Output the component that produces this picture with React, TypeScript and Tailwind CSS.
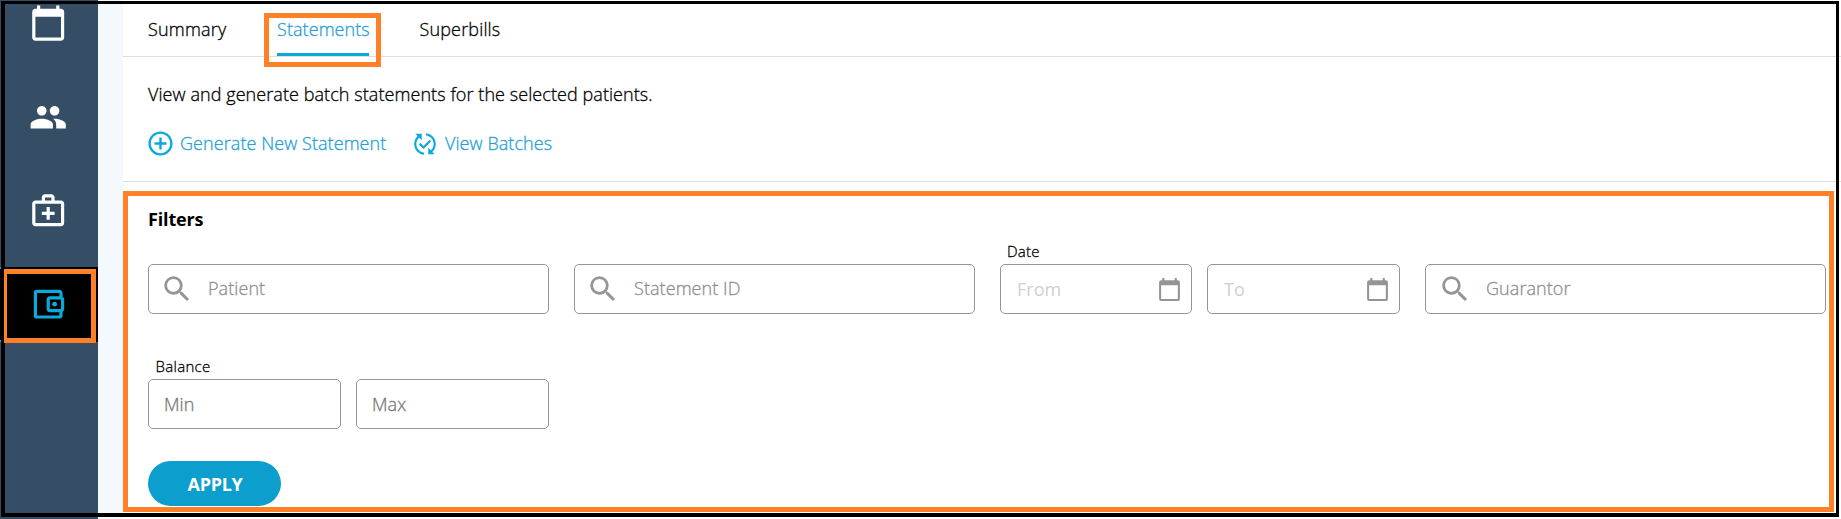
import type { ReactNode } from "react";
import {
  MdAddCircleOutline,
  MdCalendarToday,
  MdOutlineAccountBalanceWallet,
  MdOutlineMedicalServices,
  MdPeople,
  MdPublishedWithChanges,
  MdSearch,
} from "react-icons/md";

function Field({ children, className }: { children: ReactNode; className: string }) {
  return (
    <div className={`flex h-[50px] items-center rounded-[5px] border border-[#959595] ${className}`}>
      {children}
    </div>
  );
}

function SearchField({ label, inset = "pl-[11px]" }: { label: string; inset?: string }) {
  return (
    <Field className={`w-[401px] text-[#8f8f8f] ${inset}`}>
      <MdSearch className="size-[34px] shrink-0 text-[#959595]" />
      <span className="-mt-0.5 ml-[14px]">{label}</span>
    </Field>
  );
}

function DateField({ label, className }: { label: string; className: string }) {
  return (
    <Field className={`justify-between pl-4 text-[#d0d0d0] ${className}`}>
      <span className="font-normal tracking-normal [-webkit-text-stroke:0]">{label}</span>
      <MdCalendarToday className="mr-[9px] size-[25px] text-[#959595]" />
    </Field>
  );
}

function Sidebar() {
  return (
    <nav className="flex w-[98px] shrink-0 flex-col bg-[#364d66] text-white">
      <div className="flex h-[79px] justify-center pt-1 pr-0.5">
        <MdCalendarToday className="size-[38.4px]" />
      </div>
      <div className="flex h-[94px] justify-center pt-[19px] pr-0.5">
        <MdPeople className="size-[38.4px]" />
      </div>
      <div className="flex h-[94px] justify-center pt-[18px] pr-0.5">
        <MdOutlineMedicalServices className="size-[38.4px]" />
      </div>
      <div className="flex h-[75px] justify-center border-y-2 border-black bg-black pt-[16px] pr-0.5 text-[#0ca9dd]">
        <MdOutlineAccountBalanceWallet className="size-[38.4px]" />
      </div>
    </nav>
  );
}

export default function App() {
  return (
    <div className="relative flex h-[519px] w-[1841px] overflow-hidden bg-white font-['Open_Sans','Noto_Sans',sans-serif] text-[18px] leading-6 font-light tracking-[0.07px] text-black [-webkit-text-stroke:0.3px]">
      <Sidebar />
      <div className="w-[25px] shrink-0 bg-[#f4f9fd]" />
      <main className="flex flex-1 flex-col">
        <div className="flex h-[57px] border-b border-[#dedede] pt-[17px] pl-[25px]">
          <div className="w-[129px] tracking-[0.2px]">Summary</div>
          <div className="w-[142.5px] text-[#279fd5]">
            <div className="h-[39px] w-[92px] border-b-[3px] border-[#0ca9dd]">Statements</div>
          </div>
          <div className="tracking-[0.15px]">Superbills</div>
        </div>
        <section className="h-[125px] border-b border-[#dedede] pt-[25px] pl-[25px]">
          <p>View and generate batch statements for the selected patients.</p>
          <div className="mt-[23px] flex h-[29px] items-center text-[#279fd5]">
            <MdAddCircleOutline className="-ml-[2px] size-[29px] text-[#0ca9dd]" />
            <span className="-mt-0.5 ml-[5px] w-[232px]">Generate New Statement</span>
            <MdPublishedWithChanges className="size-[26px] text-[#0ca9dd]" />
            <span className="-mt-0.5 ml-[7px]">View Batches</span>
          </div>
        </section>
        <section className="pt-[25px] pl-[25px]">
          <h2 className="font-bold tracking-[-0.15px] [-webkit-text-stroke:0]">Filters</h2>
          <div className="mt-[10px] flex items-end gap-[25px]">
            <SearchField label="Patient" />
            <SearchField label="Statement ID" />
            <div>
              <div className="mb-[2px] pl-[7px] text-[15px] leading-[21px] tracking-[0.2px]">Date</div>
              <div className="flex gap-[15px]">
                <DateField label="From" className="w-[192px]" />
                <DateField label="To" className="w-[193px]" />
              </div>
            </div>
            <SearchField label="Guarantor" inset="pl-3" />
          </div>
          <div className="mt-[42px]">
            <div className="mb-[2px] pl-[7.5px] text-[15px] leading-[21px] tracking-[0.3px]">Balance</div>
            <div className="flex gap-[15px] text-[#777]">
              <Field className="w-[193px] pl-[15px]">Min</Field>
              <Field className="w-[193px] pl-[15px]">Max</Field>
            </div>
          </div>
          <button className="mt-8 flex h-[45px] w-[133px] items-center justify-center rounded-full bg-[#0c9fce] pl-px font-bold tracking-[-0.3px] text-white [-webkit-text-stroke:0]">
            APPLY
          </button>
        </section>
      </main>
      <div className="absolute top-px left-px h-[516px] w-[1838px] border-t-[3px] border-r-[3px] border-b-4 border-l-4 border-black" />
      <div className="absolute top-[267px] left-0 h-[75px] w-px border-y-2 border-[#0ca9dd] bg-black" />
      <div className="absolute top-[13px] left-[264px] h-[54px] w-[117px] border-[5px] border-[#ff8027]" />
      <div className="absolute top-[269px] left-1 h-[74px] w-[92px] border-[5px] border-l-[3px] border-[#ff8027]" />
      <div className="absolute top-[191px] left-[123px] h-[321px] w-[1711px] border-[5px] border-[#ff8027]" />
    </div>
  );
}
